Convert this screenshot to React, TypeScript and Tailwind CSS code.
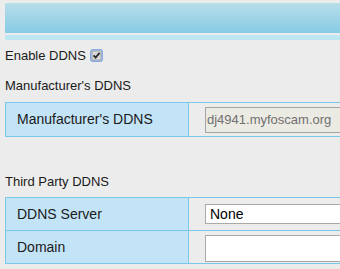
import React from 'react'

function CheckMark() {
  return (
    <svg width="13" height="13" viewBox="0 0 13 13" className="ml-[4px] shrink-0">
      <rect x="0.5" y="0.5" width="12" height="12" rx="2" fill="#a9c4f0" stroke="#86a9e6" />
      <rect x="2" y="2" width="9" height="9" fill="#d9d9d9" stroke="#9a9a9a" strokeWidth="0.8" />
      <path d="M3.6 6.4 L5.6 8.6 L9.6 3.8" fill="none" stroke="#2b2b2b" strokeWidth="1.8" />
    </svg>
  )
}

function Row({ label, first, children, pad }: { label: string; first?: boolean; children: React.ReactNode; pad: string }) {
  return (
    <div className={`flex ${first ? '' : 'border-t border-[#7cc8ea]'}`}>
      <div className="w-[183px] shrink-0 border-r border-[#7cc8ea] bg-[#c3e4f7] pl-[11px] flex items-center text-[14px] text-[#1a1a1a]">
        {label}
      </div>
      <div className={`flex-1 pl-[16px] flex ${pad}`}>{children}</div>
    </div>
  )
}

export default function App() {
  return (
    <div className="w-[340px] h-[269px] overflow-hidden bg-[#ececec] font-['Liberation_Sans',Arial,sans-serif] text-[#1a1a1a]">
      <div className="pl-[5px] pt-[3px]">
        <div className="h-[30px] bg-linear-to-b from-[#b8dee9] to-[#85cbe5]" />
        <div className="mt-[2px] h-[5px] bg-[#bfe6f3]" />
      </div>

      <div className="pl-[5px] mt-[8px] flex items-center h-[15px] text-[13px] leading-[15px]">
        Enable DDNS
        <CheckMark />
      </div>

      <div className="pl-[5px] mt-[15px] text-[13px] leading-[15px]">Manufacturer's DDNS</div>

      <div className="ml-[5px] mt-[9px] w-[400px] border border-[#7cc8ea]">
        <Row label="Manufacturer's DDNS" first pad="h-[33px] items-center">
          <div className="w-[200px] h-[26px] border border-[#a3a3a3] bg-[#ebeae3] pl-[1px] flex items-center text-[13px] text-[#707070]">
            dj4941.myfoscam.org
          </div>
        </Row>
      </div>

      <div className="pl-[5px] mt-[37px] text-[13px] leading-[15px]">Third Party DDNS</div>

      <div className="ml-[5px] mt-[8px] w-[400px] border border-[#7cc8ea]">
        <Row label="DDNS Server" first pad="h-[32px] items-center">
          <div className="w-[200px] h-[20px] border border-[#a9a9a9] bg-white pl-[4px] flex items-center text-[14px] text-black">
            None
          </div>
        </Row>
        <Row label="Domain" pad="h-[32px] items-start pt-[4px]">
          <div className="w-[200px] h-[27px] border border-[#a9a9a9] bg-white" />
        </Row>
      </div>
    </div>
  )
}
